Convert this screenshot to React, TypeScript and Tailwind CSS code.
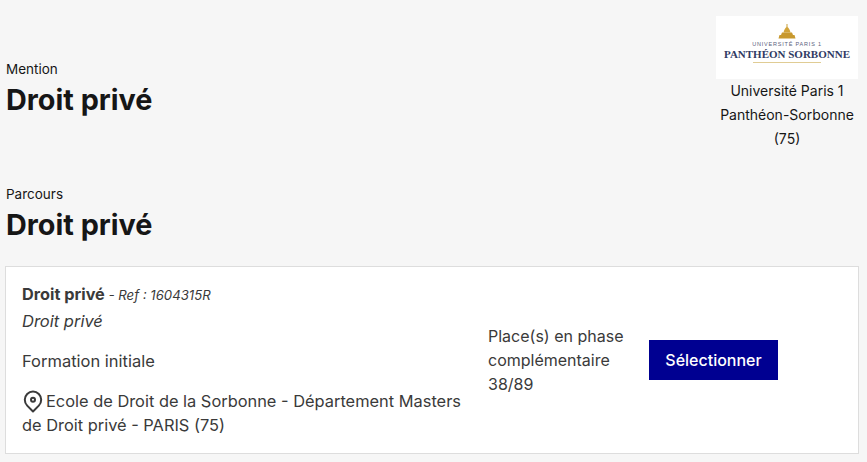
import React from "react";

const font = { fontFamily: 'Inter, sans-serif' };

const Dome = () => (
  <svg width="18" height="15" viewBox="0 0 18 15" className="block">
    <path d="M8.500 0h1v3h-1z" fill="#c9a13f" />
    <path d="M9 2.500 C7 4 6 6 5.500 8.500 H12.500 C12 6 11 4 9 2.500Z" fill="#d2a43a" />
    <path d="M4 8.500h10l1 2.500h1.500l1 3.500H.5l1-3.500H3z" fill="#c8992f" />
  </svg>
);

const Logo = () => (
  <div className="w-[142px] h-[63px] bg-white flex flex-col items-center pt-[8px]">
    <Dome />
    <div className="text-[5.500px] leading-[7px] mt-[2px] tracking-[0.8px] text-[#5a617c] font-['Liberation_Sans',sans-serif] whitespace-nowrap">
      UNIVERSITÉ PARIS 1
    </div>
    <div className="text-[11px] leading-[11px] mt-[1px] font-bold text-[#2f3a63] font-['Liberation_Serif',serif] whitespace-nowrap">
      PANTHÉON SORBONNE
    </div>
    <div className="w-[68px] h-[1px] mt-[2px] bg-[#e0cc94]" />
  </div>
);

const Heading = ({ label, title }: { label: string; title: string }) => (
  <div>
    <div className="text-[13.500px] leading-[20px] text-[#161616]">{label}</div>
    <h2 className="text-[28.800px] leading-[36px] mt-[3px] font-bold text-[#161616]">{title}</h2>
  </div>
);

export default function App() {
  return (
    <div style={font} className="w-[867px] h-[462px] overflow-hidden bg-[#f6f6f6] flex flex-col">
      <div className="h-[168px] pl-[6px] pr-[9px] pt-[16px] flex justify-between">
        <div className="pt-[43px]">
          <Heading label="Mention" title="Droit privé" />
        </div>
        <div className="w-[142px] flex flex-col items-center">
          <Logo />
          <div className="w-[142px] text-center text-[14px] leading-[24px] text-[#161616]">
            <div>Université Paris 1</div>
            <div className="whitespace-nowrap">Panthéon-Sorbonne</div>
            <div>(75)</div>
          </div>
        </div>
      </div>

      <div className="pl-[6px] pt-[16px]">
        <Heading label="Parcours" title="Droit privé" />
      </div>

      <div className="mt-[23px] ml-[5px] w-[854px] h-[188px] bg-white border border-[#dddddd] flex items-center pl-[16px]">
        <div className="w-[466px] text-[#3a3a3a] mt-[-1px]">
          <div className="leading-[24px]">
            <span className="text-[16.300px] font-bold">Droit privé</span>
            <span className="text-[13.200px] italic"> - Ref : 1604315R</span>
          </div>
          <div className="text-[16.500px] italic leading-[24px] mt-[2px]">Droit privé</div>
          <div className="text-[16.500px] leading-[24px] mt-[16px]">Formation initiale</div>
          <div className="text-[16.400px] leading-[24px] mt-[16px] w-[448px]">
            <svg width="20" height="24" viewBox="0 0 20 24" className="inline-block align-top mr-[3px] ml-[1px] text-[#3a3a3a]" fill="none" stroke="currentColor" strokeWidth="2">
              <path d="M10 22.500 L4.200 16.600 A8.200 8.200 0 1 1 15.800 16.600 Z" strokeLinejoin="round" />
              <circle cx="10" cy="10.800" r="2" />
            </svg>
            Ecole de Droit de la Sorbonne - Département Masters de Droit privé - PARIS (75)
          </div>
        </div>
        <div className="w-[161px] text-[16px] leading-[24px] text-[#3a3a3a]">
          <div>Place(s) en phase</div>
          <div>complémentaire</div>
          <div>38/89</div>
        </div>
        <button className="w-[129px] h-[40px] bg-[#000091] text-white text-[16px] font-medium">
          Sélectionner
        </button>
      </div>
    </div>
  );
}
